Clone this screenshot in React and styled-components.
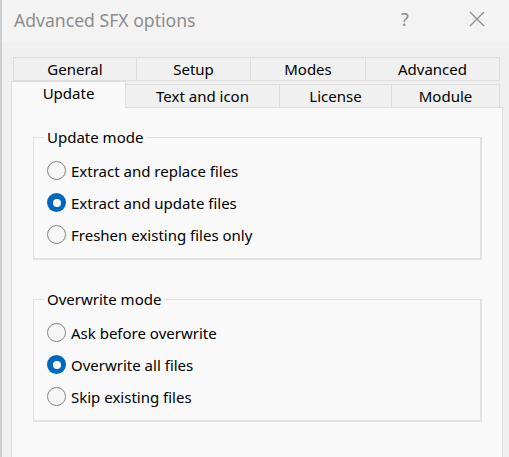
import React from 'react';
import styled, { createGlobalStyle } from 'styled-components';

const GlobalStyle = createGlobalStyle`
  html, body {
    margin: 0;
    padding: 0;
    background: #f0f0f0;
  }
  body {
    font-family: 'Noto Sans', 'Open Sans', sans-serif;
  }
`;

const Window = styled.div`
  width: 507px;
  height: 457px;
  border-left: 2px solid #cdcdcd;
  background: #f0f0f0;
  display: flex;
  flex-direction: column;
  overflow: hidden;
`;

const TitleBar = styled.div`
  height: 42px;
  display: flex;
  align-items: center;
  padding: 0 0 0 12px;
  background: #f3f3f3;
`;

const Title = styled.div`
  flex: 1;
  font-size: 17.6px;
  color: #8c8c8c;
  padding-bottom: 2px;
`;

const TitleButton = styled.div`
  width: ${({ $w }) => $w}px;
  height: 34px;
  display: flex;
  align-items: center;
  justify-content: center;
  color: #8c8c8c;
  font-size: 18px;
  padding-bottom: 4px;
`;

const Body = styled.div`
  flex: 1;
  display: flex;
  flex-direction: column;
  padding: 15px 6px 0 9px;
`;

const TabRow = styled.div`
  display: flex;
  padding-left: ${({ $indent }) => $indent}px;
  height: ${({ $h }) => $h}px;
  align-items: flex-end;
`;

const Tab = styled.div`
  width: ${({ $w }) => $w}px;
  height: ${({ $active }) => ($active ? 27 : 24)}px;
  box-sizing: border-box;
  display: flex;
  align-items: center;
  justify-content: center;
  font-size: 15px;
  color: #000;
  background: ${({ $active }) => ($active ? '#f9f9f9' : '#f0f0f0')};
  border: 1px solid #dedede;
  border-bottom: ${({ $active }) => ($active ? 'none' : '1px solid #dedede')};
  margin-left: -1px;
  padding-bottom: ${({ $active }) => ($active ? 4 : 1)}px;
  position: relative;
  z-index: ${({ $active }) => ($active ? 2 : 1)};
  &:first-child {
    margin-left: 0;
  }
`;

const Panel = styled.div`
  flex: 1;
  margin-top: -1px;
  background: #f9f9f9;
  border: 1px solid #dedede;
  border-bottom: none;
  padding: 20px 20px 0 21px;
  display: flex;
  flex-direction: column;
  gap: 30px;
`;

const Group = styled.fieldset`
  margin: 0;
  border: 2px solid #e2e2e2;
  border-width: 1px 2px 2px 1px;
  padding: 15px 12px 14px 13px;
  display: flex;
  flex-direction: column;
  gap: 13px;
`;

const Legend = styled.legend`
  font-size: 15px;
  color: #000;
  padding: 0 3px;
  margin-left: -3px;
  line-height: 18px;
`;

const Option = styled.label`
  display: flex;
  align-items: center;
  gap: 5px;
  font-size: 15px;
  color: #000;
  height: 19px;
`;

const Radio = styled.span`
  width: 19px;
  height: 19px;
  box-sizing: border-box;
  border-radius: 50%;
  flex: none;
  display: flex;
  align-items: center;
  justify-content: center;
  background: ${({ $checked }) => ($checked ? '#0067c0' : '#f6f6f6')};
  border: ${({ $checked }) => ($checked ? 'none' : '1px solid #858585')};
  &::after {
    content: '';
    display: ${({ $checked }) => ($checked ? 'block' : 'none')};
    width: 8px;
    height: 8px;
    border-radius: 50%;
    background: #fff;
  }
`;

const backTabs = [
  { label: 'General', w: 124 },
  { label: 'Setup', w: 115 },
  { label: 'Modes', w: 116 },
  { label: 'Advanced', w: 135 },
];

const frontTabs = [
  { label: 'Update', w: 115, active: true },
  { label: 'Text and icon', w: 155 },
  { label: 'License', w: 113 },
  { label: 'Module', w: 109 },
];

const groups = [
  {
    title: 'Update mode',
    options: ['Extract and replace files', 'Extract and update files', 'Freshen existing files only'],
    selected: 1,
  },
  {
    title: 'Overwrite mode',
    options: ['Ask before overwrite', 'Overwrite all files', 'Skip existing files'],
    selected: 1,
  },
];

export default function App() {
  return (
    <>
      <GlobalStyle />
      <Window>
        <TitleBar>
          <Title>Advanced SFX options</Title>
          <TitleButton $w={80}>?</TitleButton>
          <TitleButton $w={64}>
            <svg width="16" height="16" viewBox="0 0 16 16">
              <path d="M1 1 L15 15 M15 1 L1 15" stroke="#8c8c8c" strokeWidth="1.3" />
            </svg>
          </TitleButton>
        </TitleBar>
        <Body>
          <TabRow $indent={2} $h={24}>
            {backTabs.map((t) => (
              <Tab key={t.label} $w={t.w}>
                {t.label}
              </Tab>
            ))}
          </TabRow>
          <TabRow $indent={0} $h={27}>
            {frontTabs.map((t) => (
              <Tab key={t.label} $w={t.w} $active={t.active}>
                {t.label}
              </Tab>
            ))}
          </TabRow>
          <Panel>
            {groups.map((g) => (
              <Group key={g.title}>
                <Legend>{g.title}</Legend>
                {g.options.map((o, i) => (
                  <Option key={o}>
                    <Radio $checked={i === g.selected} />
                    {o}
                  </Option>
                ))}
              </Group>
            ))}
          </Panel>
        </Body>
      </Window>
    </>
  );
}
